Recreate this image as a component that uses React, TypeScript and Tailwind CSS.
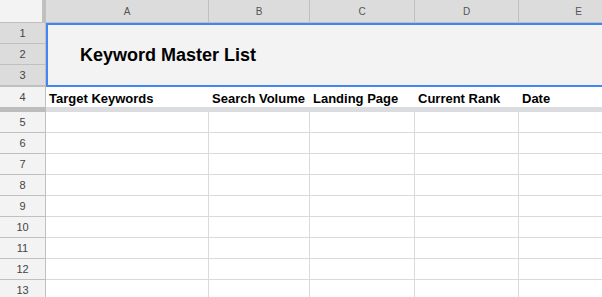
import React from "react";

const columns = [
  { key: "A", width: "w-[163px]" },
  { key: "B", width: "w-[101px]" },
  { key: "C", width: "w-[105px]" },
  { key: "D", width: "w-[104px]" },
  { key: "E", width: "w-[120px]" },
];

const headings = [
  "Target Keywords",
  "Search Volume",
  "Landing Page",
  "Current Rank",
  "Date",
];

const emptyRows = [5, 6, 7, 8, 9, 10, 11, 12, 13];

const App = () => {
  return (
    <div className="w-[602px] h-[297px] overflow-hidden bg-white font-['Liberation_Sans',Arial,sans-serif] select-none">
      {/* column letters */}
      <div className="flex h-[23px] border-b border-[#c0c0c0]">
        <div className="w-[46px] shrink-0 bg-[#f3f3f3] border-r-4 border-[#c0c0c0]" />
        {columns.map((col) => (
          <div
            key={col.key}
            className={`${col.width} shrink-0 bg-[#dcdcdc] border-r border-[#c0c0c0] flex items-center justify-center text-[10px] text-[#555]`}
          >
            {col.key}
          </div>
        ))}
      </div>

      {/* rows 1-3, merged title cell */}
      <div className="flex">
        <div className="w-[46px] shrink-0 flex flex-col">
          {[1, 2, 3].map((n) => (
            <div
              key={n}
              className="h-[21px] bg-[#dcdcdc] border-r border-b border-[#c0c0c0] flex items-center justify-center text-[11px] text-[#444]"
            >
              {n}
            </div>
          ))}
          <div className="h-px bg-[#c0c0c0]" />
        </div>
        <div className="w-[620px] shrink-0 h-[64px] bg-[#f3f3f3] border-2 border-[#4285f4] flex items-center pl-[32px]">
          <span className="text-[18px] font-bold text-black">
            Keyword Master List
          </span>
        </div>
      </div>

      {/* row 4, headings */}
      <div className="flex h-[20px]">
        <div className="w-[46px] shrink-0 bg-[#f3f3f3] border-r border-[#c0c0c0] flex items-center justify-center text-[11px] text-[#444]">
          4
        </div>
        {columns.map((col, i) => (
          <div
            key={col.key}
            className={`${col.width} shrink-0 px-[3px] pt-[4px] flex items-center whitespace-nowrap text-[13px] font-bold text-black`}
          >
            {headings[i]}
          </div>
        ))}
      </div>

      {/* frozen divider */}
      <div className="flex h-[5px]">
        <div className="w-[46px] shrink-0 bg-[#bdbdbd]" />
        <div className="flex-1 bg-[#dadce0]" />
      </div>

      {/* empty rows */}
      {emptyRows.map((n) => (
        <div key={n} className="flex h-[21px]">
          <div className="w-[46px] shrink-0 bg-[#f3f3f3] border-r border-b border-[#c0c0c0] flex items-center justify-center text-[11px] text-[#444]">
            {n}
          </div>
          {columns.map((col) => (
            <div
              key={col.key}
              className={`${col.width} shrink-0 border-r border-b border-[#dadada]`}
            />
          ))}
        </div>
      ))}
    </div>
  );
};

export default App;
